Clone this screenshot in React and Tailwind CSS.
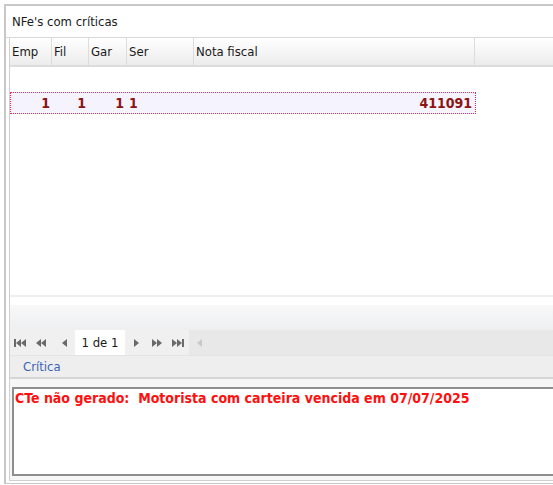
import React from "react";

const font = { fontFamily: "'DejaVu Sans Condensed', 'DejaVu Sans', sans-serif" };

const Tri = ({ dir = "left" }) => (
  <svg width="5" height="8" viewBox="0 0 5 8">
    {dir === "left" ? <path d="M5 0 L0 4 L5 8 Z" fill="currentColor" /> : <path d="M0 0 L5 4 L0 8 Z" fill="currentColor" />}
  </svg>
);

const Bar = () => <span className="inline-block w-[2px] h-[8px] bg-current" />;

const columns = [
  { label: "Emp", w: "w-[42px]" },
  { label: "Fil", w: "w-[37px]" },
  { label: "Gar", w: "w-[38px]" },
  { label: "Ser", w: "w-[67px]" },
  { label: "Nota fiscal", w: "w-[281px]" },
];

export default function App() {
  return (
    <div className="w-[553px] h-[485px] overflow-hidden bg-white pt-[4px] pl-[4px]" style={font}>
      <div className="w-[620px] h-[480px] border-t-2 border-l-2 border-b border-[#c8c8c8] flex flex-col">
        {/* Title */}
        <div className="h-[32px] shrink-0 flex items-center pl-[6px] pt-[1px] text-[13px] text-[#1a1a1a] border-b border-[#d8d8d8]">
          NFe's com críticas
        </div>

        <div className="flex-1 flex flex-col ml-[3px] mb-[2px] border-l border-b border-[#d0d0d0]">
          {/* Grid header */}
          <div className="h-[29px] shrink-0 flex bg-gradient-to-b from-white to-[#ececec] border-b-2 border-[#dcdcdc] text-[13px] text-[#1a1a1a]">
            {columns.map((c) => (
              <div key={c.label} className={`${c.w} flex items-center pl-[2px] border-r border-[#dcdcdc]`}>
                {c.label}
              </div>
            ))}
            <div className="flex-1" />
          </div>

          {/* Grid body */}
          <div className="h-[230px] shrink-0 pt-[25px] border-b-2 border-[#efefef]">
            <div className="w-[466px] h-[22px] flex items-center bg-[#f5f3fd] border border-dotted border-[#ff2040] text-[14px] font-bold text-[#8b1414]">
              <div className="w-[41px] text-right pr-[2px]">1</div>
              <div className="w-[37px] text-right pr-[3px]">1</div>
              <div className="w-[38px] text-right pr-[3px]">1</div>
              <div className="w-[67px] pl-[2px]">1</div>
              <div className="flex-1 text-right pr-[3px]">411091</div>
            </div>
          </div>

          {/* Filler area */}
          <div className="h-[8px] shrink-0 bg-white" />
          <div className="h-[25px] shrink-0 bg-gradient-to-b from-[#f8f8f9] to-[#eeeff0]" />

          {/* Pager */}
          <div className="h-[25px] shrink-0 flex items-center bg-[#f0f0f0] text-[#6a6a6a]">
            <div className="flex items-center w-[65px] pl-[4px]">
              <span className="flex items-center w-[22px]"><Bar /><Tri /><Tri /></span>
              <span className="flex items-center w-[26px]"><Tri /><Tri /></span>
              <span className="flex items-center"><Tri /></span>
            </div>
            <div className="w-[50px] h-full bg-white flex items-center justify-center text-[13px] text-[#1a1a1a]">1 de 1</div>
            <div className="flex items-center w-[64px] pl-[9px]">
              <span className="flex items-center w-[18px]"><Tri dir="right" /></span>
              <span className="flex items-center w-[20px]"><Tri dir="right" /><Tri dir="right" /></span>
              <span className="flex items-center"><Tri dir="right" /><Tri dir="right" /><Bar /></span>
            </div>
            <div className="flex-1 h-full bg-[#e8e8e8] flex items-center pl-[8px] text-[#c8c8c8]">
              <Tri />
            </div>
          </div>

          {/* Critica tab */}
          <div className="h-[24px] shrink-0 flex items-center pl-[13px] bg-[#eeeeef] border-t border-[#e4e4e4] border-b-2 border-b-[#d6d6d6] text-[13px] text-[#3c64b4]">
            Crítica
          </div>

          <div className="flex-1 pt-[8px] pl-[2px] pb-[4px] bg-[#f6f6f6]">
            <div className="h-full border-2 border-[#8e8e8e] bg-white pl-[1px] text-[14px] leading-[18px] font-bold text-[#ff1010] whitespace-pre">
              {"CTe não gerado:  Motorista com carteira vencida em 07/07/2025"}
            </div>
          </div>
        </div>
      </div>
    </div>
  );
}
